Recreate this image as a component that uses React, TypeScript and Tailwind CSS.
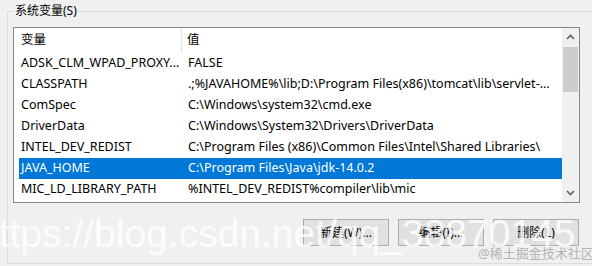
import React from 'react';

type Row = { name: string; value: string };

const rows: Row[] = [
  { name: 'ADSK_CLM_WPAD_PROXY...', value: 'FALSE' },
  { name: 'CLASSPATH', value: '.;%JAVAHOME%\\lib;D:\\Program Files(x86)\\tomcat\\lib\\servlet-...' },
  { name: 'ComSpec', value: 'C:\\Windows\\system32\\cmd.exe' },
  { name: 'DriverData', value: 'C:\\Windows\\System32\\Drivers\\DriverData' },
  { name: 'INTEL_DEV_REDIST', value: 'C:\\Program Files (x86)\\Common Files\\Intel\\Shared Libraries\\' },
  { name: 'JAVA_HOME', value: 'C:\\Program Files\\Java\\jdk-14.0.2' },
  { name: 'MIC_LD_LIBRARY_PATH', value: '%INTEL_DEV_REDIST%compiler\\lib\\mic' },
];

const selected = 'JAVA_HOME';

// scroll arrows drawn as little chevrons
const Chevron = ({ up }: { up?: boolean }) => (
  <svg width="9" height="6" viewBox="0 0 9 6" className="text-[#606060]">
    <path d={up ? 'M1 5 L4.5 1.5 L8 5' : 'M1 1 L4.5 4.5 L8 1'} fill="none" stroke="currentColor" strokeWidth="1.6" />
  </svg>
);

const Button = ({ label }: { label: string }) => (
  <button className="w-[86px] h-[27px] bg-[#e1e1e1] border border-[#adadad] text-[12px] text-black flex items-center justify-center">
    {label}
  </button>
);

export default function App() {
  return (
    <div
      className="relative w-[592px] h-[266px] overflow-hidden bg-[#f0f0f0] text-[12px] text-black"
      style={{ fontFamily: '"Noto Sans", "Noto Sans CJK SC", sans-serif' }}
    >
      <fieldset className="ml-[7px] w-[600px] h-[264px] border border-[#dcdcdc] pl-[5px] pr-[12px]">
        <legend className="ml-[1px] px-[1px] leading-[22px] text-[12px]">系统变量(S)</legend>

        {/* list view */}
        <div className="mt-[5px] w-[567px] h-[176px] border border-[#828790] bg-white flex text-[12.5px]">
          <div className="flex-1 flex flex-col pl-[5px] overflow-hidden">
            <div className="h-[25px] flex items-center shrink-0">
              <div className="w-[163px] pl-[2px] h-full flex items-center border-r border-[#e5e5e5]">变量</div>
              <div className="pl-[5px]">值</div>
            </div>
            {rows.map((r) => {
              const on = r.name === selected;
              return (
                <div
                  key={r.name}
                  className={`h-[21px] flex items-center shrink-0 whitespace-nowrap ${on ? 'bg-[#0078d7] text-white' : ''}`}
                >
                  <div className="w-[169px] pl-[2px] overflow-hidden">{r.name}</div>
                  <div className="flex-1 overflow-hidden">{r.value}</div>
                </div>
              );
            })}
          </div>

          {/* scrollbar */}
          <div className="w-[17px] bg-[#f0f0f0] flex flex-col">
            <div className="h-[18px] flex items-center justify-center">
              <Chevron up />
            </div>
            <div className="mt-[1px] mx-[1px] h-[45px] bg-[#cdcdcd]" />
            <div className="flex-1" />
            <div className="h-[18px] flex items-center justify-center">
              <Chevron />
            </div>
          </div>
        </div>

        <div className="mt-[16px] w-[567px] flex justify-end gap-[9px] pr-[1px]">
          <Button label="新建(W)..." />
          <Button label="编辑(I)..." />
          <Button label="删除(L)" />
        </div>
      </fieldset>

      {/* watermarks */}
      <div
        className="absolute left-[-23px] top-[210px] text-[39px] leading-[48px] text-white/80 whitespace-nowrap pointer-events-none"
        style={{ fontFamily: '"Liberation Sans", sans-serif' }}
      >
        https://blog.csdn.net/qq_38870145
      </div>
      <div className="absolute left-[478px] top-[244px] text-[13px] leading-[18px] text-[#b4b4b4] whitespace-nowrap">
        @稀土掘金技术社区
      </div>
    </div>
  );
}
